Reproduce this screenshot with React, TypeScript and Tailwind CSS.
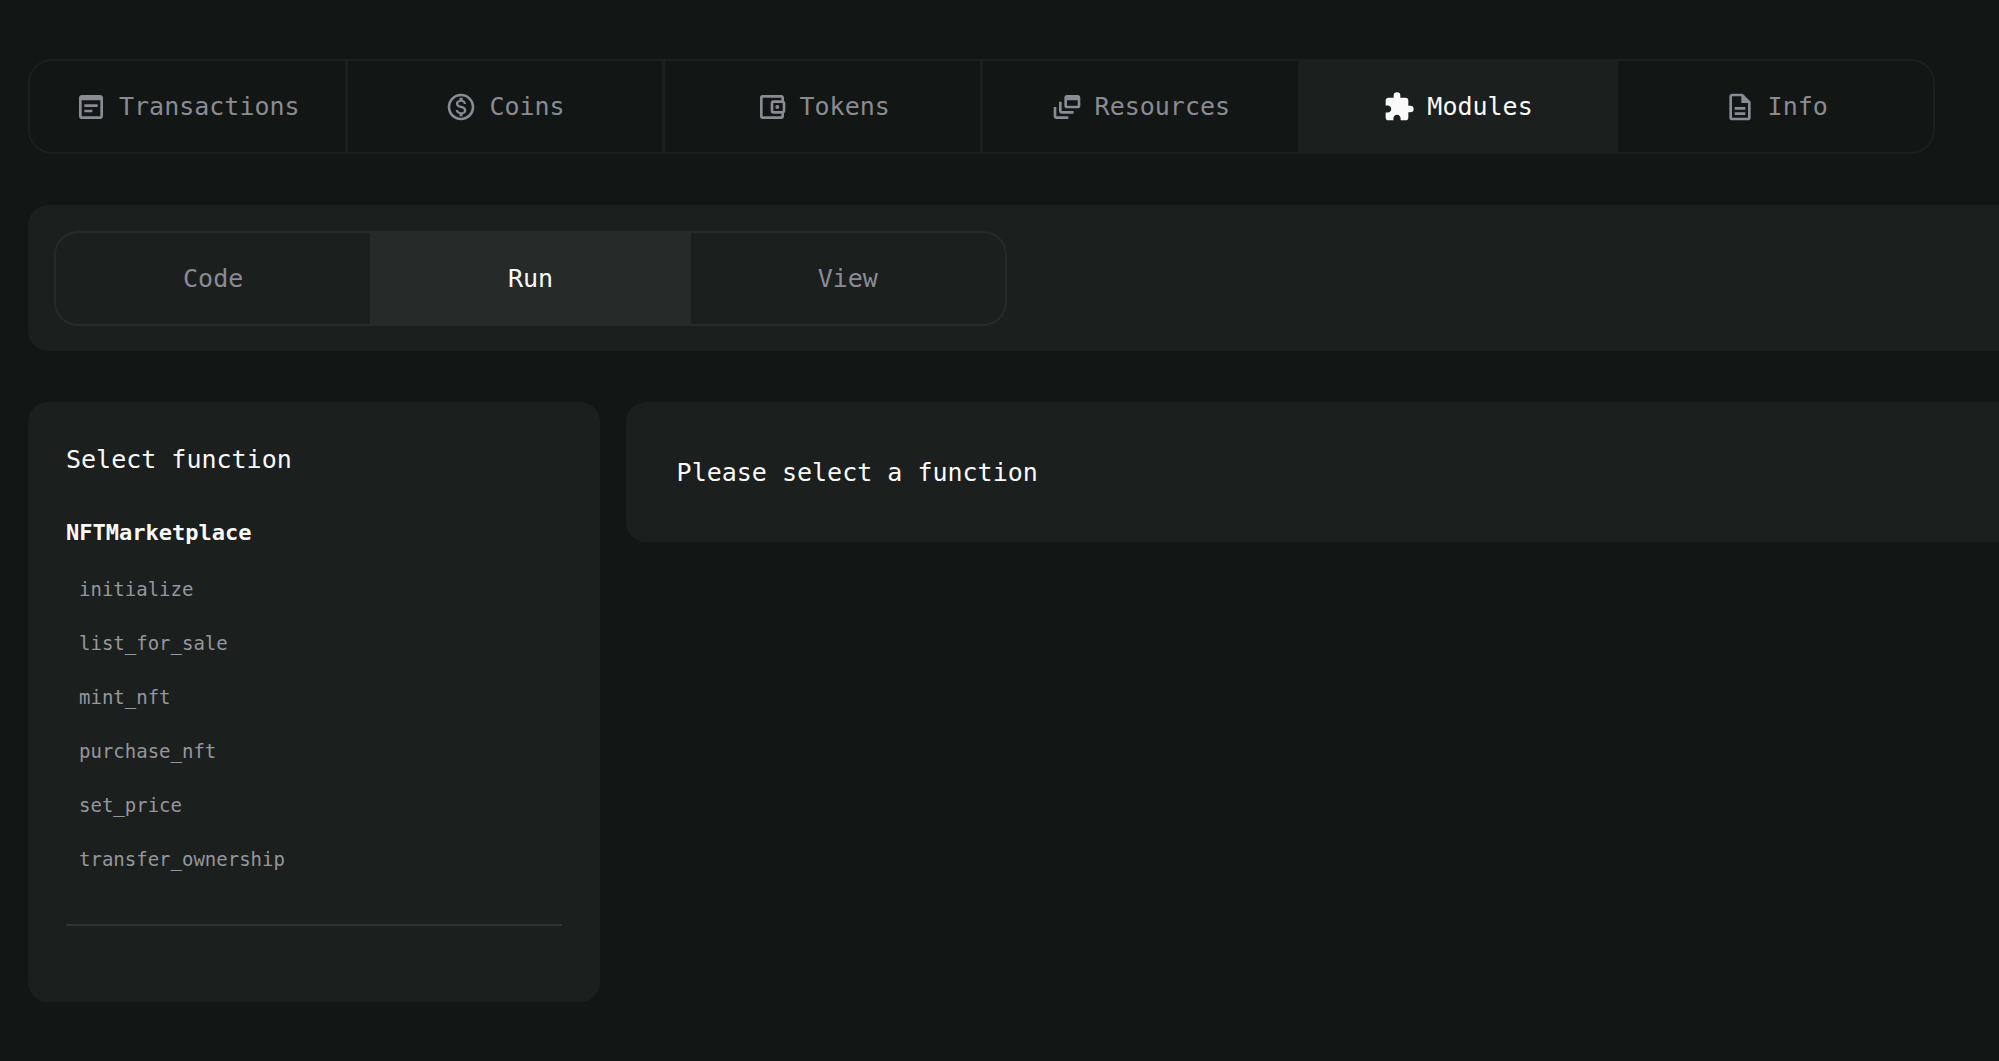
import type { ReactNode } from "react";
import {
  MdExtension,
  MdOutlineAccountBalanceWallet,
  MdOutlineDescription,
  MdOutlineDynamicFeed,
  MdOutlineMonetizationOn,
} from "react-icons/md";

function TransactionsIcon() {
  return (
    <svg viewBox="0 0 24 24" fill="currentColor" className="size-8" aria-hidden="true">
      <path d="M19 3H5c-1.1 0-2 .9-2 2v14c0 1.1.9 2 2 2h14c1.1 0 2-.9 2-2V5c0-1.1-.9-2-2-2zm0 16H5V7h14v12zM7 10h10v2H7v-2zm0 4h6v2H7v-2z" />
    </svg>
  );
}

type Tab = { label: string; icon?: ReactNode; active?: boolean };

const accountTabs: Tab[] = [
  { label: "Transactions", icon: <TransactionsIcon /> },
  { label: "Coins", icon: <MdOutlineMonetizationOn className="size-8" /> },
  { label: "Tokens", icon: <MdOutlineAccountBalanceWallet className="size-8" /> },
  { label: "Resources", icon: <MdOutlineDynamicFeed className="size-8" /> },
  { label: "Modules", icon: <MdExtension className="size-8" />, active: true },
  { label: "Info", icon: <MdOutlineDescription className="size-8" /> },
];

const moduleTabs: Tab[] = [{ label: "Code" }, { label: "Run", active: true }, { label: "View" }];

const functions = [
  "initialize",
  "list_for_sale",
  "mint_nft",
  "purchase_nft",
  "set_price",
  "transfer_ownership",
];

function TabButton({ tab, tone }: { tab: Tab; tone: string }) {
  return (
    <button
      type="button"
      role="tab"
      aria-selected={!!tab.active}
      className={`flex flex-1 items-center justify-center gap-3 border-r-3 last:border-r-0 ${tone} ${
        tab.active ? "text-[#fafafa]" : "bg-transparent text-[#8b8b94]"
      }`}
    >
      {tab.icon}
      <span>{tab.label}</span>
    </button>
  );
}

export default function App() {
  return (
    <div className="min-h-screen overflow-x-hidden bg-[#121615] pt-[59px] pl-7 font-['DejaVu_Sans_Mono','Liberation_Mono',monospace] text-[25px] leading-8 text-[#fafafa]">
      <nav
        role="tablist"
        aria-label="Account"
        className="flex h-[95px] w-full max-w-[1907px] overflow-hidden rounded-3xl border-2 border-[#1b1f1e]"
      >
        {accountTabs.map((tab) => (
          <TabButton key={tab.label} tab={tab} tone={tab.active ? "border-[#1b1f1e] bg-[#1b1f1e]" : "border-[#1b1f1e]"} />
        ))}
      </nav>

      <section className="mt-[51px] rounded-l-[20px] bg-[#1b1f1e] px-[26px] pt-[26px] pb-[25px]">
        <div
          role="tablist"
          aria-label="Module"
          className="flex h-[95px] w-full max-w-[953px] overflow-hidden rounded-3xl border-2 border-[#262a29]"
        >
          {moduleTabs.map((tab) => (
            <TabButton key={tab.label} tab={tab} tone={tab.active ? "border-[#262a29] bg-[#262a29]" : "border-[#262a29]"} />
          ))}
        </div>
      </section>

      <main className="mt-[51px] flex items-start gap-[26px] pb-14">
        <aside className="w-[29%] shrink-0 rounded-[20px] bg-[#1b1f1e] px-[38px] pt-[42px] pb-[76px]">
          <h2>Select function</h2>
          <h3 className="mt-[41px] text-[22px] font-bold">NFTMarketplace</h3>
          <ul className="mt-[13px] border-b-2 border-[#303332] pb-[38px] text-[19px] text-[#96969d]">
            {functions.map((name) => (
              <li key={name}>
                <button type="button" className="h-[54px] w-full px-[13px] text-left">
                  {name}
                </button>
              </li>
            ))}
          </ul>
        </aside>
        <section className="flex-1 rounded-l-[20px] bg-[#1b1f1e] px-[51px] pt-[55px] pb-[53px]">
          <p>Please select a function</p>
        </section>
      </main>
    </div>
  );
}
